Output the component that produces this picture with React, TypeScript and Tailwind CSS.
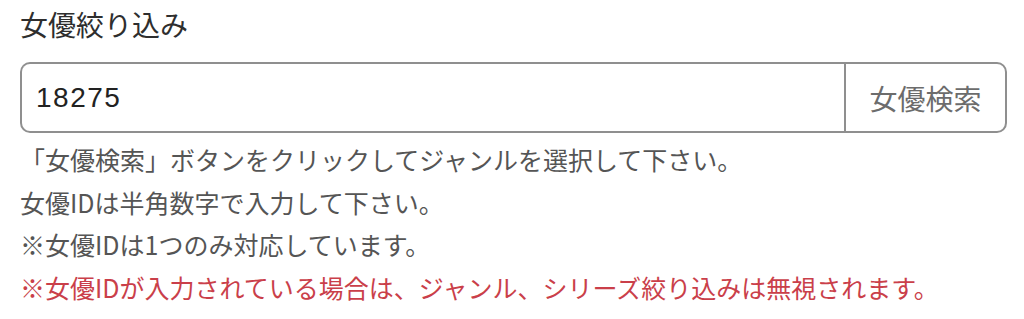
import React from "react"

export default function App() {
  return (
    <div className="w-[1024px] h-[319px] bg-white font-['Noto_Sans_CJK_JP',sans-serif] pl-[20px] pt-[4px]">
      {/* Label */}
      <div className="text-[28px] leading-[40px] font-normal text-[#2e2e2e]">女優絞り込み</div>

      {/* Input group */}
      <div className="mt-[18px] flex h-[71px] w-[987px]">
        <input
          type="text"
          defaultValue="18275"
          className="flex-1 min-w-0 border-2 border-r-0 border-[#8f8f8f] rounded-l-[10px] pl-[14px] text-[28px] tracking-[1.5px] text-[#222222] bg-white outline-none font-['Liberation_Sans','Noto_Sans_CJK_JP',sans-serif]"
        />
        <button
          type="button"
          className="w-[163px] border-2 border-[#8f8f8f] rounded-r-[10px] text-[28px] text-[#6c6c6c] bg-white"
        >
          女優検索
        </button>
      </div>

      {/* Help text */}
      <div className="mt-[5px] text-[25px] leading-[42.5px] text-[#555555]">
        <p>「女優検索」ボタンをクリックしてジャンルを選択して下さい。</p>
        <p>女優IDは半角数字で入力して下さい。</p>
        <p>※女優IDは1つのみ対応しています。</p>
        <p className="text-[#ca3f4a]">※女優IDが入力されている場合は、ジャンル、シリーズ絞り込みは無視されます。</p>
      </div>
    </div>
  )
}
